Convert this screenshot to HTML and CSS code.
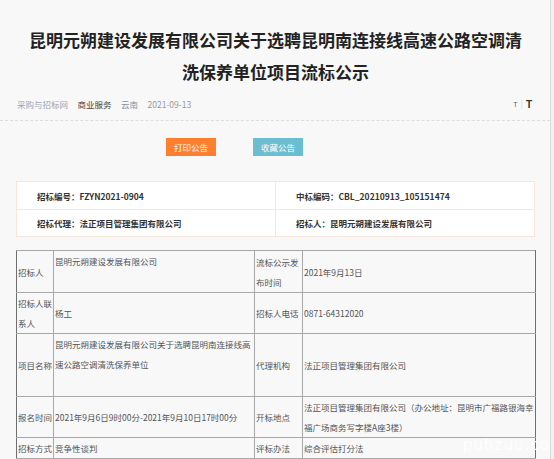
FILE: index.html
```html
<!DOCTYPE html>
<html lang="zh-CN">
<head>
    <meta charset="UTF-8">
    <meta name="viewport" content="width=device-width, initial-scale=1.0">
    <title>流标公示</title>
    <link rel="stylesheet" href="styles.css">
</head>
<body>
    <div class="page">
        <div class="head">
            <h1 class="title">昆明元朔建设发展有限公司关于选聘昆明南连接线高速公路空调清洗保养单位项目流标公示</h1>
        </div>
        <div class="meta">
            <span class="site">采购与招标网</span>
            <span class="cat">商业服务</span>
            <span class="area">云南</span>
            <span class="date">2021-09-13</span>
            <span class="sizes"><span class="small-t">T</span><span class="sep">|</span><span class="big-t">T</span></span>
        </div>

        <div class="actions">
            <button class="btn btn-print">打印公告</button>
            <button class="btn btn-fav">收藏公告</button>
        </div>

        <!-- summary box -->
        <div class="summary">
            <div class="summary-row">
                <div class="summary-cell">招标编号：FZYN2021-0904</div>
                <div class="summary-cell">中标编码：CBL_20210913_105151474</div>
            </div>
            <div class="summary-row">
                <div class="summary-cell">招标代理：法正项目管理集团有限公司</div>
                <div class="summary-cell">招标人：昆明元朔建设发展有限公司</div>
            </div>
        </div>

        <!-- detail table -->
        <table class="detail">
            <colgroup>
                <col class="c-label">
                <col class="c-value">
                <col class="c-label2">
                <col class="c-value2">
            </colgroup>
            <tr>
                <td>招标人</td>
                <td class="gap-1">昆明元朔建设发展有限公司</td>
                <td>流标公示发布时间</td>
                <td>2021年9月13日</td>
            </tr>
            <tr>
                <td>招标人联系人</td>
                <td>杨工</td>
                <td>招标人电话</td>
                <td>0871-64312020</td>
            </tr>
            <tr>
                <td>项目名称</td>
                <td class="gap-2">昆明元朔建设发展有限公司关于选聘昆明南连接线高速公路空调清洗保养单位</td>
                <td>代理机构</td>
                <td>法正项目管理集团有限公司</td>
            </tr>
            <tr>
                <td>报名时间</td>
                <td>2021年9月6日9时00分-2021年9月10日17时00分</td>
                <td>开标地点</td>
                <td>法正项目管理集团有限公司（办公地址：昆明市广福路银海幸福广场商务写字楼A座3楼）</td>
            </tr>
            <tr>
                <td>招标方式</td>
                <td>竞争性谈判</td>
                <td>评标办法</td>
                <td>综合评估打分法</td>
            </tr>
        </table>

        <div class="watermark">puhzuu.com</div>
    </div>
</body>
</html>
```

FILE: styles.css
```css
html {
    background-color: #f1f1f1;
}
body {
    margin: 0;
    padding: 0;
    font-family: "Noto Sans CJK SC", "Liberation Sans", sans-serif;
    color: #333333;
}
.page {
    position: relative;
    width: 551px;
    height: 459px;
    overflow: hidden;
    box-sizing: border-box;
    background-color: #f8f8f8;
    border-right: 1px solid #dcdcdc;
}
.head {
    width: 519px;
    padding: 24px 0 0 16px;
}
.title {
    margin: 0;
    padding: 0 10px;
    font-size: 17px;
    line-height: 32px;
    font-weight: bold;
    color: #222222;
    text-align: center;
}
.meta {
    display: flex;
    align-items: center;
    height: 16px;
    margin-top: 8px;
    padding: 0 18px 8px 17px;
    border-bottom: 1px dashed #dddddd;
    font-size: 8.5px;
}
.meta span {
    margin-right: 9.5px;
}
.site {
    color: #9aa6b6;
}
.cat {
    color: #444444;
}
.area {
    color: #8592a6;
}
.date {
    color: #999999;
}
.meta .sizes {
    margin: 0 0 0 auto;
    display: flex;
    align-items: center;
    font-family: "Liberation Sans", sans-serif;
}
.meta .sizes span {
    margin: 0;
}
.small-t {
    font-size: 7px;
    color: #666666;
}
.sep {
    color: #dddddd;
    padding: 0 3px;
    font-size: 9px;
}
.big-t {
    font-size: 10px;
    font-weight: bold;
    color: #333333;
}
.actions {
    display: flex;
    gap: 37px;
    padding: 17px 0 0 166px;
}
.btn {
    width: 50px;
    height: 18px;
    padding: 0;
    border: none;
    color: #ffffff;
    font-family: "Noto Sans CJK SC", sans-serif;
    font-size: 8.5px;
    cursor: pointer;
}
.btn-print {
    background-color: #ff7f30;
}
.btn-fav {
    background-color: #6bbdd1;
}
.summary {
    width: 519px;
    margin: 25px 0 0 16px;
    box-sizing: border-box;
    background-color: #ffffff;
    border: 1px solid #f6e6db;
}
.summary-row {
    display: flex;
    height: 27px;
}
.summary-row + .summary-row {
    height: 26px;
    border-top: 1px solid #f6e6db;
}
.summary-cell {
    flex: 1;
    display: flex;
    align-items: center;
    padding-left: 20px;
    font-size: 8.5px;
    font-weight: bold;
    color: #333333;
}
.summary-cell + .summary-cell {
    border-left: 1px solid #f6e6db;
}
.detail {
    width: 519px;
    margin: 13px 0 0 16px;
    table-layout: fixed;
    border-collapse: collapse;
    font-size: 8.5px;
    line-height: 20px;
    color: #555555;
}
.c-label {
    width: 37px;
}
.c-value {
    width: 201px;
}
.c-label2 {
    width: 48px;
}
.c-value2 {
    width: 233px;
}
.detail td {
    padding: 0 0 0 1px;
    border: 1px solid #a8a8a8;
    vertical-align: middle;
    word-break: break-all;
}
.detail td:first-child {
    border-left: 1px solid #6f6f6f;
}
.detail td:last-child {
    border-right: 1px solid #6f6f6f;
}
.detail .gap-1 {
    padding-bottom: 21px;
}
.detail .gap-2 {
    padding-bottom: 22px;
}
.watermark {
    position: absolute;
    left: 463px;
    top: 436px;
    font-family: "DejaVu Sans", sans-serif;
    font-size: 15px;
    letter-spacing: 1px;
    color: rgba(255, 255, 255, 0.9);
}
```
